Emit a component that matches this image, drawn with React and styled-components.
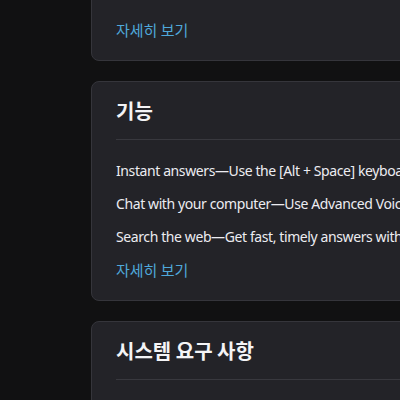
import React from 'react';
import styled, { createGlobalStyle } from 'styled-components';

const Global = createGlobalStyle`
  html, body {
    margin: 0;
    padding: 0;
    background: #111112;
  }
  body {
    font-family: "Noto Sans", "Noto Sans CJK KR", sans-serif;
    color: #ececf1;
  }
`;

const Viewport = styled.div`
  width: 400px;
  height: 400px;
  overflow: hidden;
  background: #111112;
`;

const Column = styled.div`
  margin-top: -97px;
  padding-left: 91px;
  width: 720px;
  display: flex;
  flex-direction: column;
  gap: 20px;
`;

const Card = styled.section`
  background: #232328;
  border: 1px solid #35353b;
  border-radius: 8px;
`;

const CardHeader = styled.div`
  margin: 0 24px;
  padding: 16px 0;
  border-bottom: 1px solid #38383e;
`;

const Title = styled.h2`
  margin: 0;
  font-family: "Noto Sans CJK KR", "Noto Sans", sans-serif;
  font-size: 20px;
  line-height: 25px;
  font-weight: 700;
  color: #f4f4f6;
`;

const CardBody = styled.div`
  padding: 20px 24px;
  display: flex;
  flex-direction: column;
  gap: 12px;
`;

const Text = styled.p`
  margin: 0;
  font-size: 14px;
  line-height: 21px;
  letter-spacing: -0.4px;
  white-space: nowrap;
  color: #ececf1;
`;

const MoreLink = styled.a`
  align-self: flex-start;
  margin-top: ${(p) => p.$extra || 0}px;
  font-family: "Noto Sans CJK KR", sans-serif;
  font-size: 15px;
  line-height: 21px;
  color: #4fa8da;
  text-decoration: none;
  cursor: pointer;
`;

const cards = [
  {
    title: '개요',
    lines: ['Yes, ChatGPT for Windows is here'],
    extra: 4,
  },
  {
    title: '기능',
    lines: [
      'Instant answers—Use the [Alt + Space] keyboard shortcut for faster access to ChatGPT.',
      'Chat with your computer—Use Advanced Voice to chat with your computer in real-time.',
      'Search the web—Get fast, timely answers with links to relevant web sources.',
    ],
  },
  {
    title: '시스템 요구 사항',
    lines: ['Windows 10 이상'],
  },
];

export default function App() {
  return (
    <Viewport>
      <Global />
      <Column>
        {cards.map((c) => (
          <Card key={c.title}>
            <CardHeader>
              <Title>{c.title}</Title>
            </CardHeader>
            <CardBody>
              {c.lines.map((l) => (
                <Text key={l}>{l}</Text>
              ))}
              <MoreLink $extra={c.extra}>자세히 보기</MoreLink>
            </CardBody>
          </Card>
        ))}
      </Column>
    </Viewport>
  );
}
